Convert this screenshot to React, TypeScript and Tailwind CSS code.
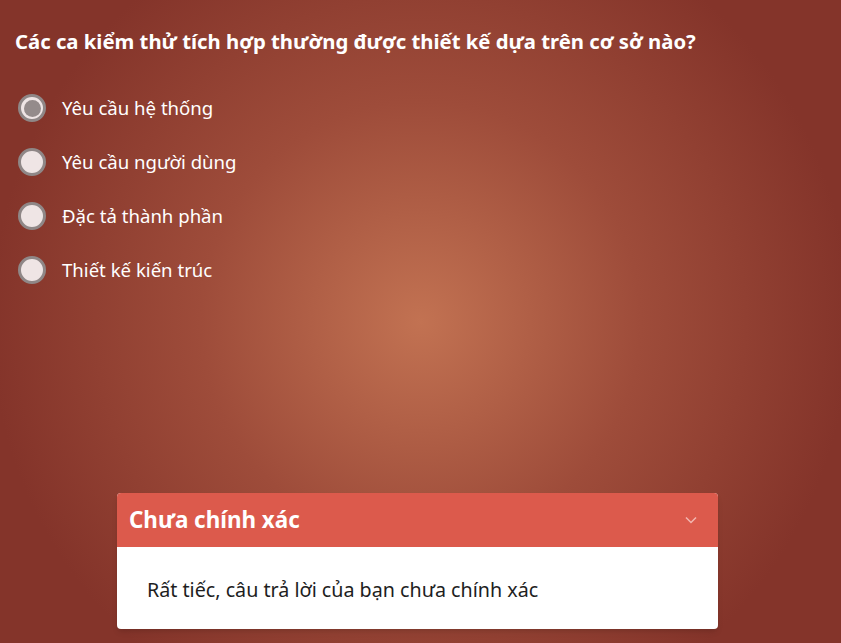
const OPTIONS = ["Yêu cầu hệ thống", "Yêu cầu người dùng", "Đặc tả thành phần", "Thiết kế kiến trúc"];

const Radio = ({ checked }: { checked: boolean }) => (
  <span className="flex h-[28px] w-[28px] shrink-0 items-center justify-center rounded-full border-[3px] border-[#8f8787] bg-[#efe5e5]">
    {checked && <span className="h-[17px] w-[17px] rounded-full bg-[#948b8b]" />}
  </span>
);

export default function App() {
  return (
    <div
      className="flex h-[643px] w-full flex-col bg-[radial-gradient(circle_at_50%_50%,#c27252_0%,#9e4c3a_220px,#84342a_430px)] text-white"
      style={{ fontFamily: '"Noto Sans", "Open Sans", sans-serif' }}
    >
      <h1 className="px-[15px] pt-[27px] text-[20.3px] font-bold leading-[28px]">
        Các ca kiểm thử tích hợp thường được thiết kế dựa trên cơ sở nào?
      </h1>

      <div className="mt-[39px] flex flex-col gap-[26px] pl-[18px]">
        {OPTIONS.map((o, i) => (
          <label key={o} className="flex h-[28px] items-center gap-[16px] text-[18.6px]">
            <Radio checked={i === 0} />
            <span>{o}</span>
          </label>
        ))}
      </div>

      <div className="mt-auto mb-[14px] ml-[117px] w-[601px] overflow-hidden rounded-[4px] bg-white shadow-md">
        <div className="flex h-[54px] items-center justify-between bg-[#dc5a4c] pl-[12px] pr-[20px]">
          <span className="text-[22.4px] font-bold">Chưa chính xác</span>
          <svg width="14" height="14" viewBox="0 0 14 14" fill="none" stroke="#f2b7b0" strokeWidth="1.5">
            <path d="M2 4.5l5 5 5-5" />
          </svg>
        </div>
        <div className="px-[30px] pt-[30px] pb-[26px] text-[19.7px] leading-[26px] text-[#1e1e1e]">
          Rất tiếc, câu trả lời của bạn chưa chính xác
        </div>
      </div>
    </div>
  );
}
